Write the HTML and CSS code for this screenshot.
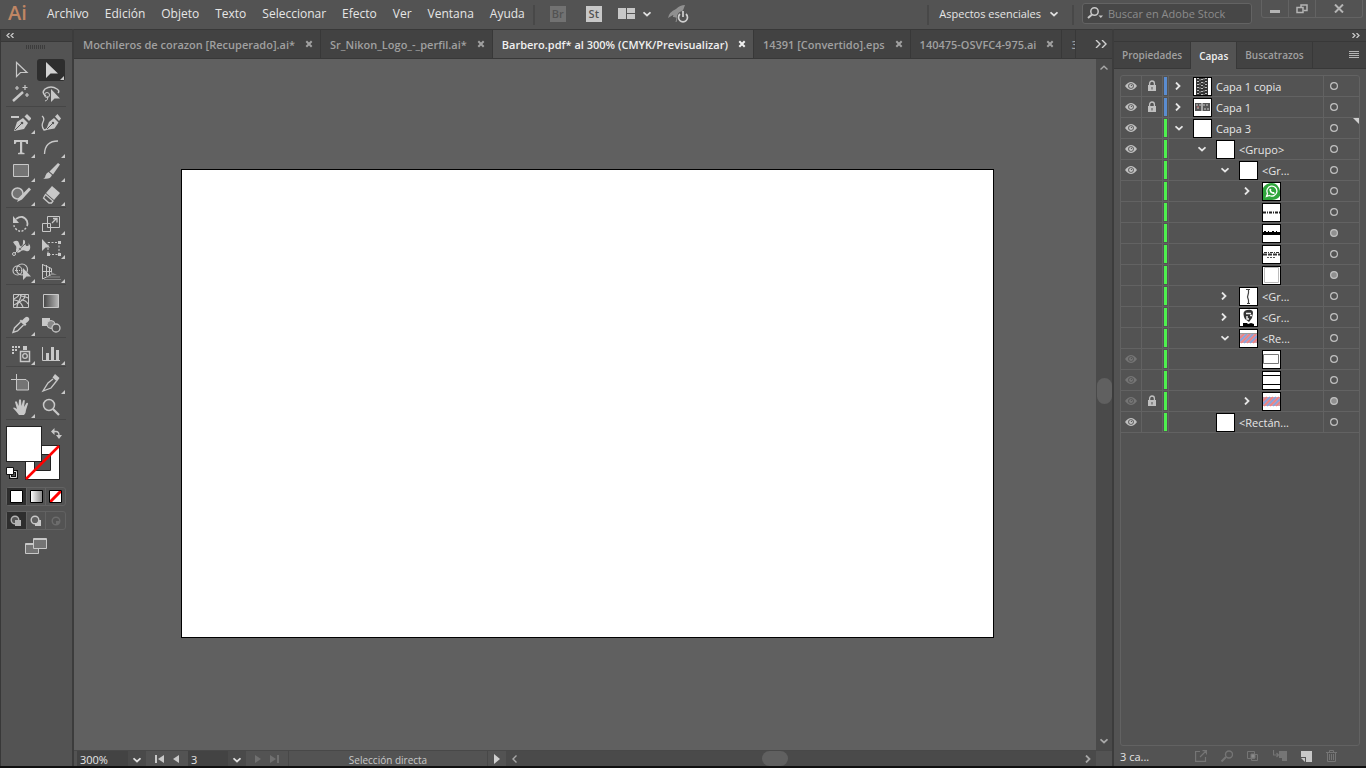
FILE: index.html
```
<!DOCTYPE html>
<html lang="es">
<head>
    <meta charset="UTF-8">
    <title>Barbero.pdf - Adobe Illustrator</title>
    <link rel="stylesheet" href="styles.css">
</head>
<body>
    <!-- shared icons -->
    <svg class="sprite" aria-hidden="true">
        <symbol id="eye" viewBox="0 0 12 8"><path d="M0 4Q3 0 6 0t6 4Q9 8 6 8T0 4z" fill="currentColor"/><circle cx="6" cy="4" r="2.8" fill="#535353"/><circle cx="6" cy="4" r="2" fill="currentColor"/><circle cx="6.4" cy="3.4" r=".6" fill="#535353"/></symbol>
        <symbol id="lock" viewBox="0 0 10 12"><path d="M2.600 6V3.400a2.400 2.400 0 0 1 4.800 0V6" fill="none" stroke="currentColor" stroke-width="1.300"/><path d="M1 5h8v6H1z" fill="currentColor"/><path d="M4.500 7h1v2.500h-1z" fill="#535353"/></symbol>
        <symbol id="right" viewBox="0 0 8 8"><path d="M1 .5L4.500 4 1 7.500" fill="none" stroke="currentColor" stroke-width="1.800"/></symbol>
        <symbol id="left" viewBox="0 0 8 8"><path d="M5.500 .5L2 4l3.500 3.500" fill="none" stroke="currentColor" stroke-width="1.400"/></symbol>
        <symbol id="down" viewBox="0 0 8 8"><path d="M.5 2.300L4 5.500l3.500-3.200" fill="none" stroke="currentColor" stroke-width="1.800"/></symbol>
        <symbol id="up" viewBox="0 0 8 8"><path d="M.5 5.500L4 2.300l3.500 3.200" fill="none" stroke="currentColor" stroke-width="1.400"/></symbol>
        <symbol id="close" viewBox="0 0 8 8"><path d="M1.300 1.300l5.400 5.400M6.700 1.300L1.300 6.700" stroke="currentColor" stroke-width="2"/></symbol>
        <symbol id="target" viewBox="0 0 8 8"><circle cx="4" cy="4" r="3.400" fill="none" stroke="currentColor" stroke-width="1.200"/></symbol>
        <symbol id="target-on" viewBox="0 0 8 8"><circle cx="4" cy="4" r="3.400" fill="#909090" stroke="currentColor" stroke-width="1.200"/></symbol>
        <symbol id="stripes" viewBox="0 0 17 17"><path d="M0 4h17v9H0z" fill="#c9a3b4"/><path d="M0 8l4-4M1 13l9-9M7 13l9-9M13 13l4-4" stroke="#f08080" stroke-width="1.600"/><path d="M0 11l7-7M4 13l9-9M10 13l7-7" stroke="#86a2dc" stroke-width="1.600"/></symbol>
    </svg>

    <header class="topbar">
        <span class="logo">Ai</span>
        <nav class="menu">
            <a href="#">Archivo</a>
            <a href="#">Edición</a>
            <a href="#">Objeto</a>
            <a href="#">Texto</a>
            <a href="#">Seleccionar</a>
            <a href="#">Efecto</a>
            <a href="#">Ver</a>
            <a href="#">Ventana</a>
            <a href="#">Ayuda</a>
        </nav>
        <span class="divider"></span>
        <div class="quick">
            <button class="app off">Br</button>
            <button class="app">St</button>
            <button class="arrange" aria-label="Organizar documentos">
                <svg width="17" height="12" fill="#c8c8c8"><path d="M0 0h8v11H0zM9 0h8v5H9zM9 6h8v5H9z"/></svg>
                <svg class="i8 light"><use href="#down"/></svg>
            </button>
            <button aria-label="Rendimiento de GPU">
                <svg width="22" height="18" fill="none"><path d="M0 13Q1 7 8 4Q12 0 17 0Q16 5 12 9L9 13L6 12L5 10z" fill="#909090"/><path d="M5 12l3-3M8 17l1-4" stroke="#909090"/><circle cx="15" cy="12" r="6" fill="#535353"/><path d="M12 9a4.500 4.500 0 1 0 6 0M15 6v6" stroke="#d0d0d0" stroke-width="1.700"/></svg>
            </button>
        </div>
        <div class="top-right">
            <span class="divider"></span>
            <button class="workspace-switch">Aspectos esenciales <svg class="i8 light"><use href="#down"/></svg></button>
            <span class="divider"></span>
            <label class="search">
                <svg width="17" height="12" fill="none" stroke="#c8c8c8"><circle cx="7.500" cy="4.500" r="3.700" stroke-width="1.500"/><path d="M5 7.500L1 11" stroke-width="2"/><path d="M11.500 8.500h4.500L13.800 11z" fill="#c8c8c8" stroke="none"/></svg>
                <input type="text" placeholder="Buscar en Adobe Stock" aria-label="Buscar en Adobe Stock">
            </label>
            <div class="window-buttons">
                <button aria-label="Minimizar"><svg width="10" height="9"><path d="M0 6h10v3H0z" fill="#b4b4b4"/></svg></button>
                <button aria-label="Restaurar"><svg width="12" height="10" fill="none" stroke="#b4b4b4" stroke-width="1.500"><path d="M5 3V1h6v5.500H7.500"/><path d="M1 3.500h6v5H1z"/></svg></button>
                <button class="wide" aria-label="Cerrar"><svg width="10" height="9"><path d="M1 .5l8 8M9 .5l-8 8" stroke="#b4b4b4" stroke-width="2"/></svg></button>
            </div>
        </div>
    </header>

    <main class="workspace">
        <aside class="toolbox">
            <div class="dock-head">
                <svg width="8" height="5" fill="none" stroke="#c8c8c8" stroke-width="1.300"><path d="M3.500 0L1 2.500 3.500 5M7.500 0L5 2.500 7.500 5"/></svg>
            </div>
            <div class="grip"></div>
            <div class="tools">
                <button aria-label="Selección"><svg class="tool"><path d="M5.500 2.500v14l4-4h6.500z" fill="none" stroke="#c8c8c8" stroke-width="1.200"/></svg></button>
                <button class="active more" aria-label="Selección directa"><svg class="tool"><path d="M5 2v16l4.500-4.500H17z" fill="#d2d2d2"/></svg></button>
                <button aria-label="Varita mágica"><svg class="tool"><path d="M2 17L12 8" stroke="#c8c8c8" stroke-width="2.500"/><path d="M14 1v5M11.500 3.500h5M6 2v4M4 4h4M16 9v4M14 11h4" stroke="#c8c8c8" stroke-width="1.200"/></svg></button>
                <button aria-label="Lazo"><svg class="tool"><path d="M5 12Q0 9 4 5q6-4 12 0 3 2 1 4" fill="none" stroke="#c8c8c8" stroke-width="1.500"/><circle cx="6" cy="11" r="2.500" fill="none" stroke="#c8c8c8"/><path d="M6 12q2 4-2 5" fill="none" stroke="#c8c8c8"/><path d="M10 5v13l3.500-3.500H19z" fill="#c8c8c8"/></svg></button>
            </div>
            <div class="tools">
                <button class="more" aria-label="Eliminar punto de ancla"><svg class="tool"><path d="M0 4h8" stroke="#c8c8c8" stroke-width="2"/><path d="M3 18L6 9l6-4 5 5-4 6z" fill="#c8c8c8"/><path d="M13.500 3.500L16 1l4.500 4.500-2.500 2.500z" fill="#c8c8c8"/><path d="M4 17l6-6" stroke="#535353"/><circle cx="11" cy="10" r="1.300" fill="#535353"/></svg></button>
                <button aria-label="Curvatura"><svg class="tool"><path d="M1 3q3 2 1 6t1 8q2 0 4-2" fill="none" stroke="#c8c8c8" stroke-width="1.300"/><path d="M5 17L8 9l5-4 4.500 4.500-4 6z" fill="#c8c8c8"/><path d="M14 3.500L16.500 1 20 5.500 18 8z" fill="#c8c8c8"/><path d="M6 16l5-5" stroke="#535353"/><circle cx="12" cy="10" r="1.200" fill="#535353"/></svg></button>
                <button class="more" aria-label="Texto"><svg class="tool"><path d="M3 3h14v4h-1.500l-1-2H11.200v10.500l2.300.5v1.200H7V16l2-.5V5H5.500l-1 2H3z" fill="#c8c8c8"/></svg></button>
                <button class="more" aria-label="Arco"><svg class="tool"><path d="M3.500 17Q4 4 17 4" fill="none" stroke="#c8c8c8" stroke-width="1.300"/></svg></button>
                <button class="more" aria-label="Rectángulo"><svg class="tool"><path d="M2.500 3.500h15v12h-15z" fill="#747474" stroke="#c8c8c8"/></svg></button>
                <button class="more" aria-label="Pincel"><svg class="tool"><path d="M17 2l2 1.500-7 10-3.500-3z" fill="#c8c8c8"/><path d="M7.500 11l3.500 3Q9 19 2 17.500q2 0 2.500-3 1-3 3-3.500z" fill="#c8c8c8"/></svg></button>
                <button class="more" aria-label="Shaper"><svg class="tool"><circle cx="6.500" cy="8.500" r="5.500" fill="#747474" stroke="#c8c8c8" stroke-width="1.500"/><path d="M20 4.500L11 14.500 6 17l2-4.500 10-10z" fill="#c8c8c8"/></svg></button>
                <button class="more" aria-label="Borrador"><svg class="tool"><path d="M11 1l8 7-6 7-8-7z" fill="#c8c8c8"/><path d="M4.500 9.500l7.500 6.500-1.500 2H8l-5.500-5z" fill="none" stroke="#c8c8c8" stroke-width="1.300"/></svg></button>
            </div>
            <div class="tools">
                <button class="more" aria-label="Rotar"><svg class="tool"><path d="M5 5q7-5 11 2 1 3 0 5" fill="none" stroke="#c8c8c8" stroke-width="1.800"/><path d="M2 2v7h6z" fill="#c8c8c8"/><path d="M15 14q-5 6-10 1-2-2-2-4" fill="none" stroke="#c8c8c8" stroke-width="1.500" stroke-dasharray="2 1.500"/></svg></button>
                <button class="more" aria-label="Escala"><svg class="tool"><path d="M1.500 9.500h8v8h-8zM6.500 2.500h12v11h-12z" fill="none" stroke="#c8c8c8"/><path d="M11 9l4-4M12 4.500h4v4" fill="none" stroke="#c8c8c8" stroke-width="1.300"/></svg></button>
                <button class="more" aria-label="Anchura"><svg class="tool"><path d="M2 4q5-3 6 1t2 3q2 0 2-4t2-1q0 5 2 5 3 0 1-3 3 2 2 6-1 3-4 2-4-2-6 1-4 2-4-2 1-4-1-5z" fill="#c8c8c8"/><path d="M3 16L15 5" stroke="#535353"/><path d="M3 16l5-5" stroke="#c8c8c8"/><circle cx="3" cy="16" r="1.500" fill="#535353" stroke="#c8c8c8"/><circle cx="9" cy="11" r="1.500" fill="#535353" stroke="#c8c8c8"/></svg></button>
                <button class="more" aria-label="Transformación libre"><svg class="tool"><path d="M7 4.500h11v12H7z" fill="none" stroke="#c8c8c8" stroke-dasharray="2 1.500"/><path d="M1 1v12l3.500-3.500H9z" fill="#c8c8c8"/><path d="M17 3h3v3h-3zM17 15h3v3h-3zM6 15h3v3H6z" fill="#c8c8c8"/></svg></button>
                <button class="more" aria-label="Creador de formas"><svg class="tool"><circle cx="6.500" cy="8.500" r="4.500" fill="none" stroke="#c8c8c8" stroke-width="1.200"/><circle cx="11" cy="7.500" r="5.500" fill="none" stroke="#c8c8c8" stroke-width="1.200"/><path d="M4 8.500h9" stroke="#c8c8c8" stroke-dasharray="1 1"/><path d="M12 6v12l3.500-3.500H20z" fill="#c8c8c8"/></svg></button>
                <button class="more" aria-label="Cuadrícula de perspectiva"><svg class="tool"><path d="M1.500 2v15M5.500 3v11M8.500 5v8M1.500 2.500l9 4v6l-9 4.500M1.500 9.500h9" fill="none" stroke="#c8c8c8"/><path d="M10 10l6 3h-6z" fill="#888"/><path d="M5 15h14M3 17.500h17" stroke="#888"/></svg></button>
            </div>
            <div class="tools">
                <button aria-label="Malla"><svg class="tool"><path d="M2.500 3.500h15v13h-15z" fill="none" stroke="#c8c8c8"/><path d="M3 8q4-2 5-4M3 14q6-2 7-10M6 16q0-4 4-6t4-6M3 9q6 0 9 7M10 9q5 0 7 4M9 5q5 0 8 2" fill="none" stroke="#c8c8c8" stroke-width="1.200"/></svg></button>
                <button aria-label="Degradado"><svg class="tool"><defs><linearGradient id="grad"><stop offset="0" stop-color="#444"/><stop offset="1" stop-color="#b8b8b8"/></linearGradient></defs><path d="M2.500 3.500h15v13h-15z" fill="url(#grad)" stroke="#c8c8c8"/></svg></button>
                <button class="more" aria-label="Cuentagotas"><svg class="tool"><path d="M17.500 2.500q2 2-1 4.500l-2 1.500 1 1-1.500 1.500-5.500-5L10 4.500l1 1L13 3.500q2.500-3 4.500-1z" fill="#c8c8c8"/><path d="M9.500 7L3.500 13 2 17.500 6.500 16l6-6" fill="none" stroke="#c8c8c8" stroke-width="1.400"/></svg></button>
                <button aria-label="Fusión"><svg class="tool"><path d="M1 3h8v8H1z" fill="#c8c8c8"/><circle cx="10" cy="9.500" r="4" fill="#888" stroke="#c8c8c8"/><circle cx="15" cy="13" r="4" fill="#535353" stroke="#c8c8c8" stroke-width="1.300"/></svg></button>
            </div>
            <div class="tools">
                <button class="more" aria-label="Rociar símbolos"><svg class="tool"><path d="M1 3h8M1 6h5M1 9h2" stroke="#c8c8c8" stroke-width="2" stroke-dasharray="2 1"/><path d="M12 2h4v4h-4z" fill="#c8c8c8"/><path d="M9.500 7.500h9v10h-9z" fill="none" stroke="#c8c8c8" stroke-width="1.500"/><circle cx="14" cy="12" r="2.300" fill="none" stroke="#c8c8c8" stroke-width="1.300"/></svg></button>
                <button class="more" aria-label="Gráfica de columnas"><svg class="tool"><path d="M1.500 3v13.500H19" fill="none" stroke="#c8c8c8"/><path d="M5 9h3v7H5zM10 3h3v13h-3zM15 6h3v10h-3z" fill="#c8c8c8"/></svg></button>
            </div>
            <div class="tools">
                <button aria-label="Mesa de trabajo"><svg class="tool"><path d="M5.500 1v6M0 6.500h5" stroke="#c8c8c8"/><path d="M5.500 6.500H15l2.500 2.500v8h-12z" fill="#747474" stroke="#c8c8c8"/></svg></button>
                <button class="more" aria-label="Sector"><svg class="tool"><path d="M14 1l4.500 4-2.500 3.500-4.500-4z" fill="#c8c8c8"/><path d="M12 6L7 10 2 18l8-3 5.500-7" fill="none" stroke="#c8c8c8" stroke-width="1.300"/></svg></button>
                <button class="more" aria-label="Mano"><svg class="tool"><path d="M8 18q-3-4-6-7 1-1.500 4 1L4 5q1-1.500 2 0l1.500 4L8 3q1-1.500 2 0l.500 6L12 3.500q1.500-1 1.800.3L13 10l2.500-4q1.500-.6 1.500.8L15 13q0 3-2 5z" fill="#c8c8c8"/></svg></button>
                <button aria-label="Zoom"><svg class="tool"><circle cx="8" cy="8" r="5.500" fill="#606060" stroke="#c8c8c8" stroke-width="1.500"/><path d="M12 12l6 6" stroke="#c8c8c8" stroke-width="2.200"/></svg></button>
            </div>
            <div class="paint">
                <button class="stroke-swatch" aria-label="Trazo"><svg width="35" height="35"><path d="M1 1h33v33H1zM10 10v15h15V10z" fill="#fff" fill-rule="evenodd"/><path d="M.5.500h34v34H.500zM9.500 9.500h16v16h-16z" fill="none" stroke="#222"/><path d="M1 34L34 1" stroke="#f00" stroke-width="2.500"/></svg></button>
                <button class="fill-swatch" aria-label="Relleno"></button>
                <button class="swap" aria-label="Intercambiar"><svg width="11" height="11"><path d="M2 3.500h3q3 0 3 4" fill="none" stroke="#c8c8c8" stroke-width="1.300"/><path d="M0 3.500L3.500 0v7zM5 7h6l-3 4z" fill="#c8c8c8"/></svg></button>
                <button class="default" aria-label="Colores por defecto"><svg width="12" height="12"><path d="M4.500 4.500h6v6h-6z" fill="none" stroke="#111" stroke-width="3"/><path d="M4.500 4.500h6v6h-6z" fill="none" stroke="#ddd"/><path d="M.5.500h7v7h-7z" fill="#fff" stroke="#111"/></svg></button>
            </div>
            <div class="modes">
                <button class="active" aria-label="Color"><svg width="13" height="13"><path d="M.5.500h12v12H.500z" fill="#fff" stroke="#000"/></svg></button>
                <button aria-label="Degradado"><svg width="13" height="13"><defs><linearGradient id="grad2"><stop offset="0" stop-color="#fff"/><stop offset="1" stop-color="#888"/></linearGradient></defs><path d="M.5.500h12v12H.500z" fill="url(#grad2)" stroke="#000"/></svg></button>
                <button aria-label="Ninguno"><svg width="13" height="13"><path d="M.5.500h12v12H.500z" fill="#fff"/><path d="M1 12L12 1" stroke="#f00" stroke-width="3"/><path d="M.5.500h12v12H.500z" fill="none" stroke="#000"/></svg></button>
            </div>
            <div class="modes">
                <button class="active" aria-label="Dibujo normal"><svg width="12" height="12"><circle cx="5" cy="5" r="3.800" fill="#555" stroke="#b4b4b4" stroke-width="1.400"/><path d="M5 5h6v6H5z" fill="#b4b4b4"/></svg></button>
                <button aria-label="Dibujar detrás"><svg width="12" height="12"><path d="M5 5h6v6H5z" fill="#c8c8c8"/><circle cx="5" cy="5" r="3.800" fill="#606060" stroke="#c8c8c8" stroke-width="1.400"/></svg></button>
                <button aria-label="Dibujar dentro" disabled><svg width="12" height="12"><circle cx="6" cy="6" r="3.800" fill="none" stroke="#6c6c6c" stroke-width="1.400"/><path d="M6 6h3v3H6z" fill="#6c6c6c"/></svg></button>
            </div>
            <button class="screen-mode" aria-label="Modo de pantalla"><svg width="22" height="16" stroke="#c8c8c8" fill="#747474"><path d="M.5 5.500h13v10H.500z"/><path d="M8.500.500h13v10h-13z"/><path d="M1 6.500h7M9 1.500h12"/></svg></button>
        </aside>

        <section class="document">
            <div class="tabs">
                <div class="tab"><a href="#">Mochileros de corazon [Recuperado].ai*</a><button aria-label="Cerrar"><svg class="i8"><use href="#close"/></svg></button></div>
                <div class="tab"><a href="#">Sr_Nikon_Logo_-_perfil.ai*</a><button aria-label="Cerrar"><svg class="i8"><use href="#close"/></svg></button></div>
                <div class="tab current"><a href="#">Barbero.pdf* al 300% (CMYK/Previsualizar)</a><button aria-label="Cerrar"><svg class="i8"><use href="#close"/></svg></button></div>
                <div class="tab"><a href="#">14391 [Convertido].eps</a><button aria-label="Cerrar"><svg class="i8"><use href="#close"/></svg></button></div>
                <div class="tab"><a href="#">140475-OSVFC4-975.ai</a><button aria-label="Cerrar"><svg class="i8"><use href="#close"/></svg></button></div>
                <div class="tab cut"><a href="#">3</a></div>
                <button class="more-tabs" aria-label="Más documentos"><svg width="12" height="8" fill="none" stroke="#d0d0d0" stroke-width="1.400"><path d="M1 0l4 4-4 4M7 0l4 4-4 4"/></svg></button>
            </div>
            <div class="view">
                <div class="canvas">
                    <div class="artboard"></div>
                </div>
                <div class="scroll vertical">
                    <svg class="i8"><use href="#up"/></svg>
                    <span class="thumb"></span>
                    <svg class="i8"><use href="#down"/></svg>
                </div>
            </div>
            <div class="status">
                <input class="zoom-level" type="text" value="300%" aria-label="Zoom">
                <button class="drop" aria-label="Elegir zoom"><svg class="i8 light"><use href="#down"/></svg></button>
                <div class="pager">
                    <button aria-label="Primera"><svg width="9" height="8" fill="#c8c8c8"><path d="M0 0h2v8H0zM9 0v8L3 4z"/></svg></button>
                    <button aria-label="Anterior"><svg width="6" height="8" fill="#c8c8c8"><path d="M6 0v8L0 4z"/></svg></button>
                </div>
                <input class="page-number" type="text" value="3" aria-label="Mesa de trabajo">
                <button class="drop" aria-label="Elegir mesa"><svg class="i8 light"><use href="#down"/></svg></button>
                <div class="pager">
                    <button aria-label="Siguiente" disabled><svg width="6" height="8" fill="#707070"><path d="M0 0v8l6-4z"/></svg></button>
                    <button aria-label="Última" disabled><svg width="9" height="8" fill="#707070"><path d="M7 0h2v8H7zM0 0v8l6-4z"/></svg></button>
                </div>
                <span class="tool-name">Selección directa</span>
                <button class="play" aria-label="Mostrar"><svg width="6" height="10" fill="#d0d0d0"><path d="M0 0v10l6-5z"/></svg></button>
                <div class="scroll horizontal">
                    <svg class="i8"><use href="#left"/></svg>
                    <span class="thumb"></span>
                    <svg class="i8"><use href="#right"/></svg>
                </div>
                <span class="corner"></span>
            </div>
        </section>

        <aside class="panel">
            <div class="dock-head right">
                <svg width="8" height="5" fill="none" stroke="#c8c8c8" stroke-width="1.300"><path d="M.5 0L3 2.500.5 5M4.500 0L7 2.500 4.500 5"/></svg>
            </div>
            <div class="panel-tabs">
                <button>Propiedades</button>
                <button class="current">Capas</button>
                <button>Buscatrazos</button>
                <button class="panel-menu" aria-label="Menú del panel"><svg width="10" height="8" stroke="#b4b4b4"><path d="M0 .5h10M0 2.500h10M0 4.500h10M0 6.500h10"/></svg></button>
            </div>
            <ul class="layers">
                <li class="layer blue">
                    <span class="cell"><svg class="eye"><use href="#eye"/></svg></span>
                    <span class="cell"><svg class="lock"><use href="#lock"/></svg></span>
                    <span class="color"></span>
                    <span class="name"><svg class="i8"><use href="#right"/></svg><svg class="art"><path d="M2 0h12v17H2z" fill="#333"/><path d="M4 0v17M8 1v16M12 0v17" stroke="#bbb" stroke-width="2" stroke-dasharray="1 2"/><path d="M6 1v16M10 0v17" stroke="#888" stroke-dasharray="2 2"/></svg>Capa 1 copia</span>
                    <span class="target"><svg class="i8"><use href="#target"/></svg></span>
                </li>
                <li class="layer blue">
                    <span class="cell"><svg class="eye"><use href="#eye"/></svg></span>
                    <span class="cell"><svg class="lock"><use href="#lock"/></svg></span>
                    <span class="color"></span>
                    <span class="name"><svg class="i8"><use href="#right"/></svg><svg class="art"><path d="M1 4h15v8H1z" fill="#555"/><path d="M2 6h5M3 9h3M9 6h6M10 10h5" stroke="#ccc" stroke-dasharray="2 1"/><path d="M8 4v8" stroke="#fff"/><path d="M3 8h2" stroke="#c66"/></svg>Capa 1</span>
                    <span class="target"><svg class="i8"><use href="#target"/></svg></span>
                </li>
                <li class="layer marked">
                    <span class="cell"><svg class="eye"><use href="#eye"/></svg></span>
                    <span class="cell"></span>
                    <span class="color"></span>
                    <span class="name"><svg class="i8"><use href="#down"/></svg><svg class="art"></svg>Capa 3</span>
                    <span class="target"><svg class="i8"><use href="#target"/></svg></span>
                </li>
                <li class="layer">
                    <span class="cell"><svg class="eye"><use href="#eye"/></svg></span>
                    <span class="cell"></span>
                    <span class="color"></span>
                    <span class="name level-1"><svg class="i8"><use href="#down"/></svg><svg class="art"></svg>&lt;Grupo&gt;</span>
                    <span class="target"><svg class="i8"><use href="#target"/></svg></span>
                </li>
                <li class="layer">
                    <span class="cell"><svg class="eye"><use href="#eye"/></svg></span>
                    <span class="cell"></span>
                    <span class="color"></span>
                    <span class="name level-2"><svg class="i8"><use href="#down"/></svg><svg class="art"></svg>&lt;Gr...</span>
                    <span class="target"><svg class="i8"><use href="#target"/></svg></span>
                </li>
                <li class="layer">
                    <span class="cell"></span>
                    <span class="cell"></span>
                    <span class="color"></span>
                    <span class="name level-3"><svg class="i8"><use href="#right"/></svg><svg class="art"><path d="M0 17V5q3-5 9-5t8 8-8 9H0z" fill="#2fa53c"/><path d="M3.500 13.500l1-3a5 5 0 1 1 2 2z" fill="none" stroke="#fff" stroke-width="1.300"/><path d="M7 6q0 4 4.500 4.500M7 6l1 1.500M11.500 10.500L10 9.500" fill="none" stroke="#fff" stroke-width="1.500"/></svg></span>
                    <span class="target"><svg class="i8"><use href="#target"/></svg></span>
                </li>
                <li class="layer">
                    <span class="cell"></span>
                    <span class="cell"></span>
                    <span class="color"></span>
                    <span class="name level-3"><svg class="i8"></svg><svg class="art"><path d="M0 8.500h17" stroke="#222" stroke-width="2" stroke-dasharray="3 1 1 1"/></svg></span>
                    <span class="target"><svg class="i8"><use href="#target"/></svg></span>
                </li>
                <li class="layer">
                    <span class="cell"></span>
                    <span class="cell"></span>
                    <span class="color"></span>
                    <span class="name level-3"><svg class="i8"></svg><svg class="art"><path d="M0 8.500h17" stroke="#000" stroke-width="3"/><path d="M1 6.500h15" stroke="#000" stroke-dasharray="2 2 1 3"/></svg></span>
                    <span class="target"><svg class="i8"><use href="#target-on"/></svg></span>
                </li>
                <li class="layer">
                    <span class="cell"></span>
                    <span class="cell"></span>
                    <span class="color"></span>
                    <span class="name level-3"><svg class="i8"></svg><svg class="art"><path d="M1 6.500h15" stroke="#333" stroke-dasharray="3 1 1 1"/><path d="M0 8.500h17" stroke="#333" stroke-width="2" stroke-dasharray="4 1"/><path d="M4 11.500h9" stroke="#555" stroke-dasharray="2 1"/></svg></span>
                    <span class="target"><svg class="i8"><use href="#target"/></svg></span>
                </li>
                <li class="layer">
                    <span class="cell"></span>
                    <span class="cell"></span>
                    <span class="color"></span>
                    <span class="name level-3"><svg class="i8"></svg><svg class="art"><path d="M1.500.500h14v15h-14z" fill="none" stroke="#bbb"/></svg></span>
                    <span class="target"><svg class="i8"><use href="#target-on"/></svg></span>
                </li>
                <li class="layer">
                    <span class="cell"></span>
                    <span class="cell"></span>
                    <span class="color"></span>
                    <span class="name level-2"><svg class="i8"><use href="#right"/></svg><svg class="art"><path d="M6 1.500h4M8.500 1v4l-1 4 1 3v4M7 15.500h3" fill="none" stroke="#444" stroke-width="1.200"/></svg>&lt;Gr...</span>
                    <span class="target"><svg class="i8"><use href="#target"/></svg></span>
                </li>
                <li class="layer">
                    <span class="cell"></span>
                    <span class="cell"></span>
                    <span class="color"></span>
                    <span class="name level-2"><svg class="i8"><use href="#right"/></svg><svg class="art"><path d="M4 8Q2 2 7 1q6-1 6 3l-1 5-3 4-4-3z" fill="#333"/><path d="M6 4.500h5M7 7v3h2M10 6.500h2" fill="none" stroke="#eee" stroke-width="1.500"/><path d="M3 17v-3h4l1 1 3-1 3 1v2z" fill="#000"/></svg>&lt;Gr...</span>
                    <span class="target"><svg class="i8"><use href="#target"/></svg></span>
                </li>
                <li class="layer">
                    <span class="cell"></span>
                    <span class="cell"></span>
                    <span class="color"></span>
                    <span class="name level-2"><svg class="i8"><use href="#down"/></svg><svg class="art"><use href="#stripes"/><path d="M0 3.500h17" stroke="#999"/></svg>&lt;Re...</span>
                    <span class="target"><svg class="i8"><use href="#target"/></svg></span>
                </li>
                <li class="layer">
                    <span class="cell"><svg class="eye dim"><use href="#eye"/></svg></span>
                    <span class="cell"></span>
                    <span class="color"></span>
                    <span class="name level-3"><svg class="i8"></svg><svg class="art"><path d="M.5 3.500h15v9H.500z" fill="none" stroke="#777"/></svg></span>
                    <span class="target"><svg class="i8"><use href="#target"/></svg></span>
                </li>
                <li class="layer">
                    <span class="cell"><svg class="eye dim"><use href="#eye"/></svg></span>
                    <span class="cell"></span>
                    <span class="color"></span>
                    <span class="name level-3"><svg class="i8"></svg><svg class="art"><path d="M0 3.500h17M0 12.500h17" stroke="#000"/></svg></span>
                    <span class="target"><svg class="i8"><use href="#target"/></svg></span>
                </li>
                <li class="layer">
                    <span class="cell"><svg class="eye dim"><use href="#eye"/></svg></span>
                    <span class="cell"><svg class="lock"><use href="#lock"/></svg></span>
                    <span class="color"></span>
                    <span class="name level-3"><svg class="i8"><use href="#right"/></svg><svg class="art"><use href="#stripes"/></svg></span>
                    <span class="target"><svg class="i8"><use href="#target-on"/></svg></span>
                </li>
                <li class="layer">
                    <span class="cell"><svg class="eye"><use href="#eye"/></svg></span>
                    <span class="cell"></span>
                    <span class="color"></span>
                    <span class="name level-1"><svg class="i8"></svg><svg class="art"></svg>&lt;Rectán...</span>
                    <span class="target"><svg class="i8"><use href="#target"/></svg></span>
                </li>
            </ul>
            <div class="panel-foot">
                <span>3 ca...</span>
                <button aria-label="Exportar" disabled><svg width="12" height="12" fill="none" stroke="#757575" stroke-width="1.200"><path d="M5 1.500H.6v9.900h9.900V7M5 7l6-6M7.500.6h4v4"/></svg></button>
                <button aria-label="Localizar" disabled><svg width="12" height="12" fill="none" stroke="#757575"><circle cx="8" cy="4.500" r="3.500" stroke-width="1.400"/><path d="M5 7l-4.500 4.500" stroke-width="2"/></svg></button>
                <button aria-label="Máscara de recorte" disabled><svg width="12" height="12" fill="none" stroke="#757575"><path d="M.5 1.500h7v7h-7zM4.500 4.500h6v6h-6z"/><path d="M4 4h4v4H4z" fill="#8a8a8a"/></svg></button>
                <button aria-label="Nueva subcapa" disabled><svg width="14" height="12" fill="#757575"><path d="M6 1h8v10H9V8H6z"/><path d="M.5 0v5H5M3.500 3l2 2-2 2" fill="none" stroke="#757575" stroke-width="1.200"/></svg></button>
                <button aria-label="Nueva capa"><svg width="11" height="11" fill="#c8c8c8"><path d="M0 0h11v11H5V6H0zM0 7h4v4z"/></svg></button>
                <button aria-label="Eliminar" disabled><svg width="11" height="12" fill="none" stroke="#757575"><path d="M0 2.500h11M3.500 2V.5h4V2M1.500 3v8.500h8V3M3.500 4v6M5.500 4v6M7.500 4v6"/></svg></button>
            </div>
        </aside>
    </main>
</body>
</html>
```
FILE: styles.css
```
* {
    margin: 0;
    padding: 0;
    box-sizing: border-box;
}
body {
    display: flex;
    flex-direction: column;
    height: 100vh;
    overflow: hidden;
    font-family: 'Open Sans', 'Noto Sans', sans-serif;
    font-size: 12px;
    background: #535353;
    color: #e6e6e6;
    border-bottom: 2px solid #101010;
}
button, input {
    font: inherit;
    color: inherit;
    background: none;
    border: none;
}
button {
    display: flex;
    align-items: center;
    justify-content: center;
}
a {
    color: inherit;
    text-decoration: none;
}
svg {
    display: block;
    flex: none;
}
.sprite {
    position: absolute;
    width: 0;
    height: 0;
}
.i8 {
    width: 8px;
    height: 8px;
}
.light {
    color: #e0e0e0;
}

/* Top bar */
.topbar {
    display: flex;
    align-items: center;
    height: 29px;
    flex: none;
}
.logo {
    width: 47px;
    padding: 0 0 4px 8px;
    font-size: 20px;
    font-weight: 600;
    line-height: 24px;
    color: #c08664;
}
.menu {
    display: flex;
    gap: 16px;
    padding-bottom: 2px;
    line-height: 26px;
}
.divider {
    width: 2px;
    height: 20px;
    background: #484848;
}
.menu + .divider {
    margin-left: 8px;
}
.quick {
    display: flex;
    align-items: center;
    margin-left: 15px;
    padding-bottom: 2px;
}
.app {
    width: 16px;
    height: 16px;
    margin-right: 20px;
    background: #c8c8c8;
    color: #535353;
    font-size: 11px;
    font-weight: 600;
}
.app.off {
    background: #727272;
}
.arrange {
    gap: 8px;
    margin: 0 17px 0 -4px;
}
.top-right {
    display: flex;
    align-items: center;
    height: 100%;
    margin-left: auto;
}
.workspace-switch {
    gap: 9px;
    padding: 0 14px 2px 10px;
    font-size: 11px;
    line-height: 24px;
}
.search {
    display: flex;
    align-items: center;
    gap: 4px;
    width: 170px;
    height: 21px;
    margin: 0 9px 3px 8px;
    padding-left: 4px;
    background: #474747;
    border: 1px solid #636363;
    border-radius: 3px;
}
.search input {
    width: 140px;
    font-size: 11px;
}
.search input::placeholder {
    color: #8c8c8c;
}
.window-buttons {
    display: flex;
    align-self: flex-start;
    height: 18px;
    margin-right: 3px;
    border: 1px solid #636363;
    border-top: none;
    border-radius: 0 0 3px 3px;
}
.window-buttons button {
    width: 27px;
    border-right: 1px solid #636363;
}
.window-buttons .wide {
    width: 46px;
    border-right: none;
}

.workspace {
    display: flex;
    flex: 1;
    min-height: 0;
}
.dock-head {
    display: flex;
    align-items: center;
    height: 13px;
    padding-left: 5px;
    background: #424242;
    border-top: 1px solid #383838;
    border-bottom: 1px solid #383838;
}
.dock-head.right {
    justify-content: flex-end;
    padding-right: 6px;
}

/* Toolbox */
.toolbox {
    flex: none;
    width: 74px;
    border-left: 1px solid #383838;
    border-right: 2px solid #3c3c3c;
}
.grip {
    width: 19px;
    height: 4px;
    margin: 3px auto 9px 25px;
    background: repeating-linear-gradient(90deg, #3c3c3c 0 1px, #535353 1px 2px);
}
.tools {
    display: grid;
    grid-template-columns: 30px 30px;
    width: 60px;
    margin: 0 5px 4px;
    border-bottom: 1px solid #464646;
}
.tools button {
    position: relative;
    height: 24px;
}
.tool {
    width: 20px;
    height: 20px;
}
.tools .active {
    height: 22px;
    margin: 1px;
    background: #2e2e2e;
    border-radius: 3px;
}
.more::after {
    content: "";
    position: absolute;
    right: 1px;
    bottom: 1px;
    border: 2px solid transparent;
    border-right-color: #c8c8c8;
    border-bottom-color: #c8c8c8;
}
.paint {
    position: relative;
    width: 60px;
    height: 56px;
    margin: 6px 5px 5px;
}
.paint button {
    position: absolute;
}
.stroke-swatch {
    left: 19px;
    top: 19px;
}
.fill-swatch {
    left: 0;
    top: 0;
    width: 36px;
    height: 36px;
}
.paint .fill-swatch {
    background: #fff;
    border: 1px solid #222;
}
.swap {
    left: 45px;
    top: 2px;
}
.default {
    left: 0;
    top: 41px;
}
.modes {
    display: flex;
    width: 60px;
    height: 19px;
    margin: 0 5px 5px;
    border: 1px solid #626262;
    border-radius: 3px;
}
.modes button {
    flex: 1;
    border-right: 1px solid #626262;
}
.modes button:last-child {
    border-right: none;
}
.modes .active {
    background: #2e2e2e;
}
.screen-mode {
    margin: 8px 0 0 24px;
}

/* Document */
.document {
    display: flex;
    flex-direction: column;
    flex: 1;
    min-width: 0;
}
.tabs {
    display: flex;
    height: 30px;
    background: #424242;
    border-top: 1px solid #383838;
    border-bottom: 1px solid #383838;
    font-size: 11px;
    font-weight: 600;
    color: #a0a0a0;
}
.tab {
    display: flex;
    align-items: center;
    gap: 10px;
    padding: 0 7px 0 9px;
    border-right: 1px solid #383838;
    white-space: nowrap;
}
.tab.current {
    background: #535353;
    color: #f0f0f0;
}
.tab.cut {
    width: 14px;
    padding-right: 0;
    overflow: hidden;
}
.more-tabs {
    margin-left: auto;
    padding-right: 5px;
}
.view {
    display: flex;
    flex: 1;
    min-height: 0;
}
.canvas {
    display: flex;
    flex: 1;
    padding: 110px 102px 112px 107px;
    background: #606060;
}
.artboard {
    flex: 1;
    background: #fff;
    border: 1px solid #000;
}
.scroll {
    display: flex;
    align-items: center;
    justify-content: space-between;
    background: #4a4a4a;
    color: #a8a8a8;
}
.thumb {
    background: #606060;
    border-radius: 8px;
}
.vertical {
    flex-direction: column;
    width: 16px;
    padding: 5px 0;
}
.vertical .thumb {
    width: 15px;
    height: 26px;
    margin-top: 306px;
    margin-bottom: auto;
}
.horizontal {
    flex: 1;
    padding: 0 3px 0 5px;
}
.horizontal .thumb {
    width: 26px;
    height: 15px;
    margin-left: 243px;
    margin-right: auto;
}
.corner {
    width: 16px;
}
.status {
    display: flex;
    height: 16px;
    padding-left: 3px;
    border-top: 1px solid #484848;
    font-size: 11px;
}
.status input {
    width: 51px;
    padding: 3px 0 0 3px;
    background: #434343;
    line-height: 12px;
}
.status .page-number {
    width: 40px;
}
.drop {
    width: 18px;
    padding-top: 3px;
    background: #4a4a4a;
}
.pager {
    display: flex;
    gap: 9px;
    padding: 0 9px;
    width: 42px;
}
.pager button {
    padding-top: 1px;
}
.tool-name {
    width: 200px;
    padding-top: 2px;
    border-left: 1px solid #484848;
    border-right: 1px solid #484848;
    color: #c8c8c8;
    font-size: 10px;
    line-height: 14px;
    text-align: center;
}
.play {
    width: 18px;
}

/* Layers panel */
.panel {
    display: flex;
    flex-direction: column;
    flex: none;
    width: 254px;
    border-left: 2px solid #3c3c3c;
}
.panel-tabs {
    display: flex;
    height: 27px;
    background: #424242;
    border-bottom: 1px solid #383838;
    color: #a0a0a0;
    font-size: 10px;
    font-weight: 600;
}
.panel-tabs button {
    padding: 0 8px;
    border-right: 1px solid #383838;
}
.panel-tabs .current {
    margin-bottom: -1px;
    background: #535353;
    color: #f0f0f0;
}
.panel-tabs .panel-menu {
    margin-left: auto;
    padding: 0 7px;
    border: none;
}
.layers {
    flex: 1;
    margin: 6px 6px 0;
    border: 1px solid #626262;
    border-radius: 3px;
    list-style: none;
    font-size: 11px;
}
.layer {
    position: relative;
    display: flex;
    height: 21px;
    border-bottom: 1px solid #626262;
}
.cell {
    display: flex;
    align-items: center;
    justify-content: center;
    width: 21px;
    border-right: 1px solid #626262;
}
.eye {
    width: 12px;
    height: 8px;
    color: #c0c0c0;
}
.eye.dim {
    color: #757575;
}
.lock {
    width: 10px;
    height: 12px;
    color: #c0c0c0;
}
.color {
    width: 5px;
    border: 1px solid #535353;
    background: #4ef04e;
}
.blue .color {
    background: #5a8cd0;
}
.name {
    display: flex;
    align-items: center;
    flex: 1;
    padding-left: 6px;
    border-left: 1px solid #626262;
    white-space: nowrap;
}
.level-1 {
    padding-left: 29px;
}
.level-2 {
    padding-left: 52px;
}
.level-3 {
    padding-left: 75px;
}
.art {
    width: 19px;
    height: 19px;
    margin: 0 4px 0 10px;
    background: #fff;
    border: 1px solid #000;
}
.target {
    display: flex;
    align-items: center;
    width: 36px;
    padding-left: 6px;
    border-left: 1px solid #626262;
    color: #c0c0c0;
}
.marked::after {
    content: "";
    position: absolute;
    top: 0;
    right: 0;
    border: 3px solid #d0d0d0;
    border-left-color: transparent;
    border-bottom-color: transparent;
}
.panel-foot {
    display: flex;
    align-items: center;
    justify-content: flex-end;
    gap: 14px;
    height: 20px;
    padding: 0 29px 0 6px;
    font-size: 11px;
}
.panel-foot span {
    margin-right: auto;
}
```
